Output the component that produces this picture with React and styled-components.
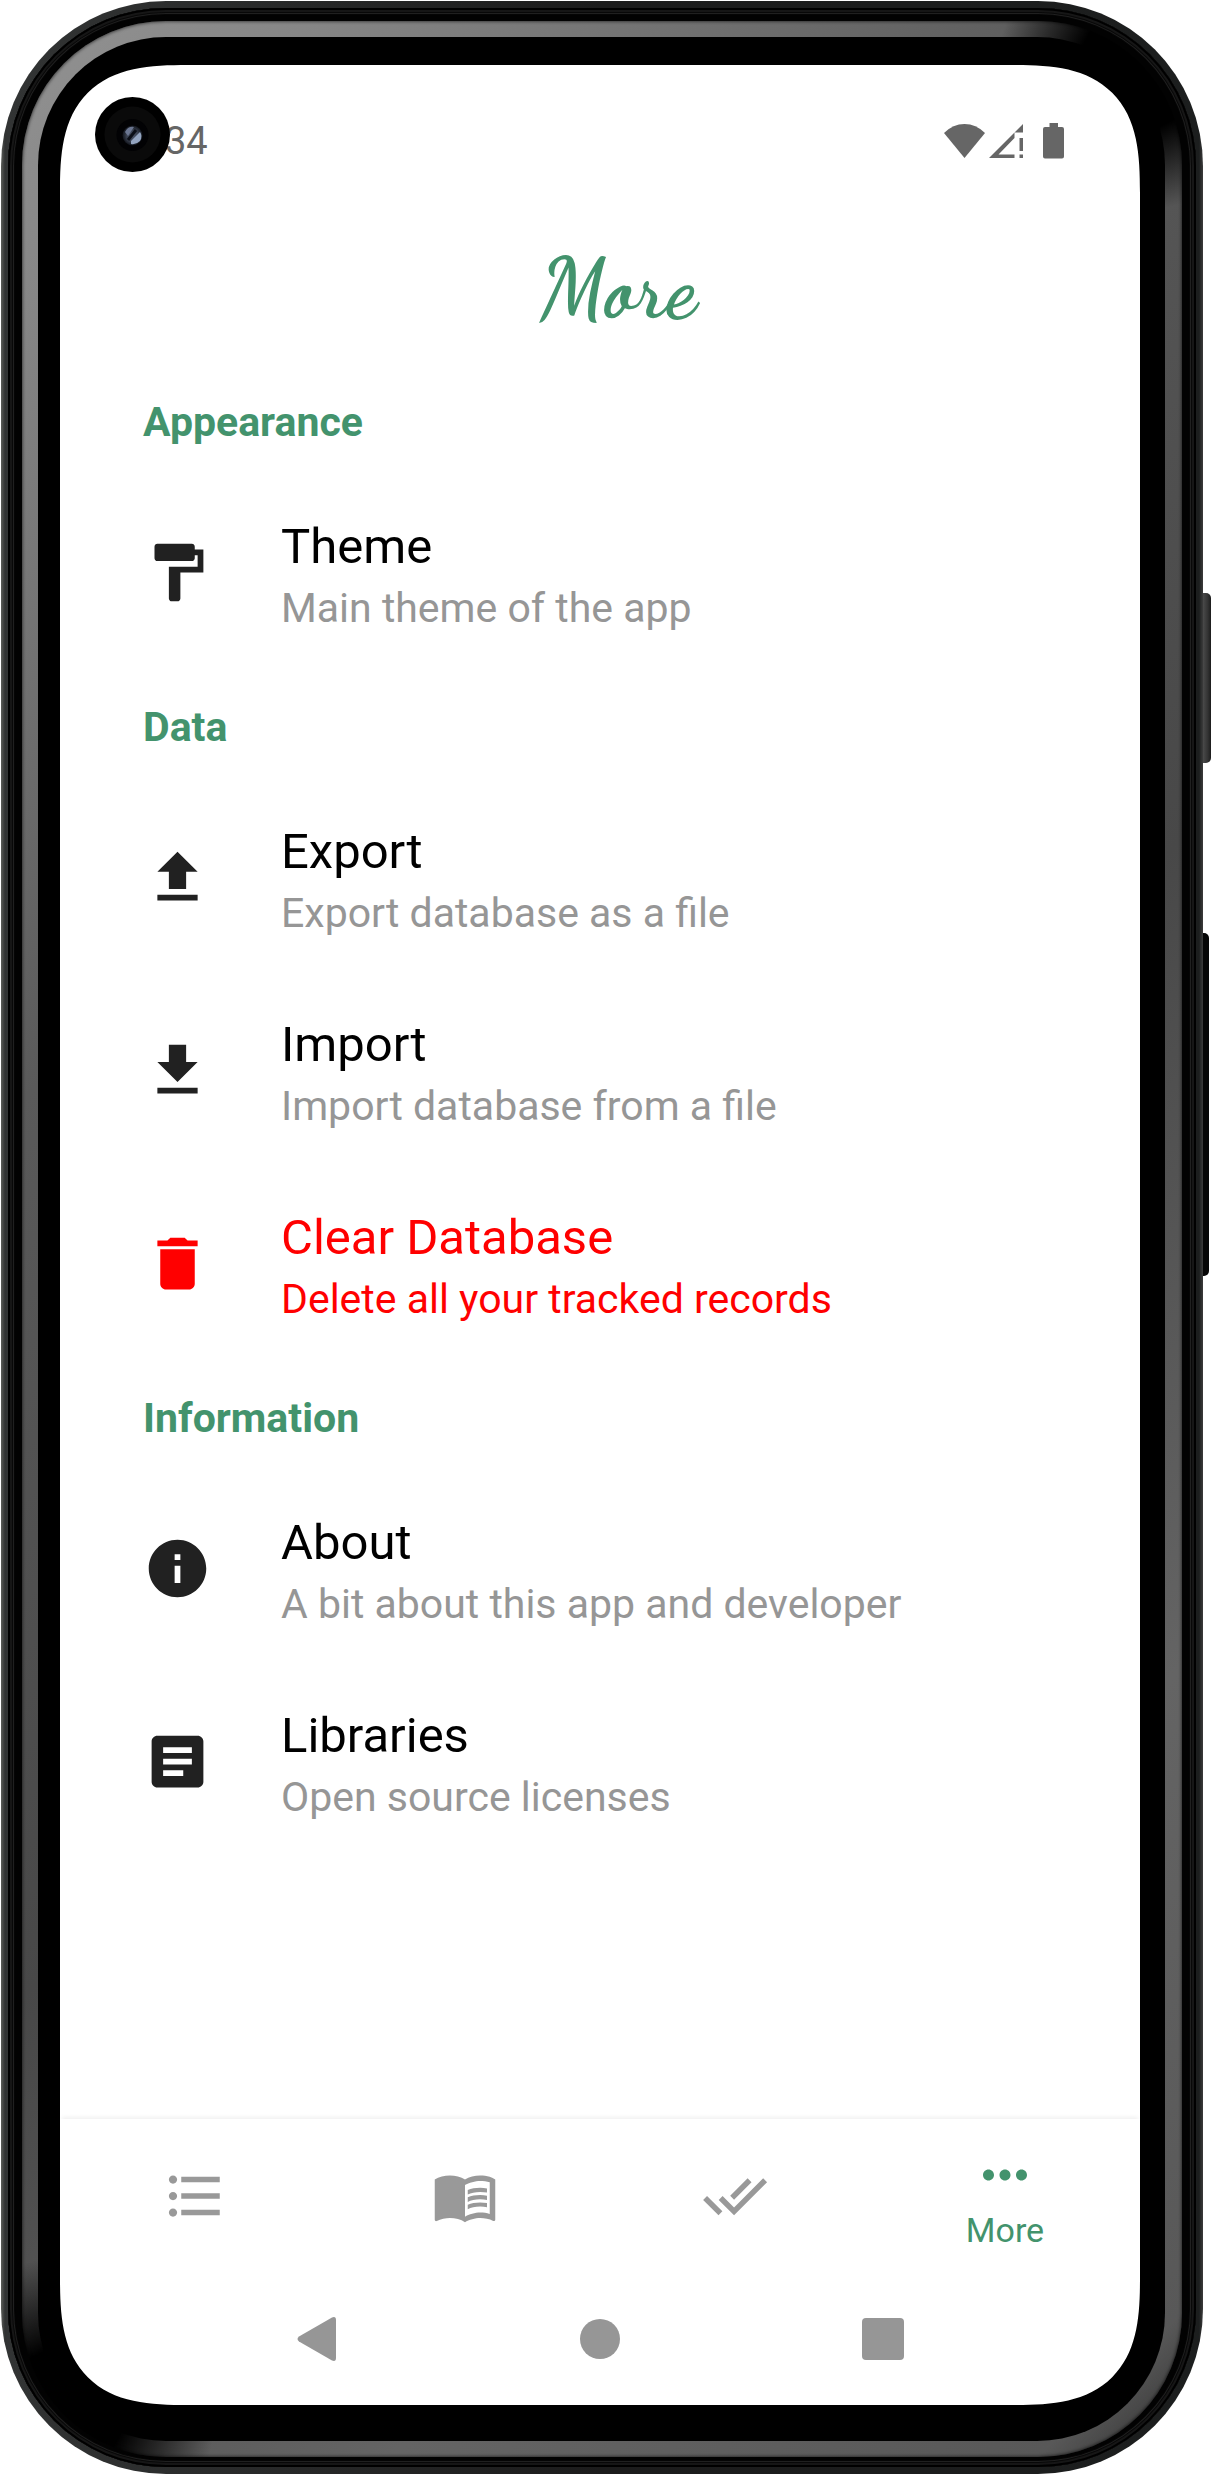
import React from "react";
import styled, { createGlobalStyle } from "styled-components";

const GREEN = "#43936d";
const RED = "#ff0000";
const MUTED = "#969696";

const GlobalStyle = createGlobalStyle`
  * { box-sizing: border-box; }
  body { margin: 0; background: #fff; font-family: Roboto, "Noto Sans", sans-serif; }
  button { border: 0; margin: 0; padding: 0; background: none; font: inherit; color: inherit; cursor: pointer; }
`;

const Stage = styled.div`
  display: flex;
  min-height: 100vh;
  padding: 1px 0 0 1px;
`;

const Shell = styled.div`
  flex: 1;
  display: flex;
  padding: 7px;
  border-radius: 165px;
  background: linear-gradient(90deg, #5c5e5a 0, #303232 4px, #323434 7px, #1c1c1c 50%, #1c1e1e calc(100% - 4px), #3c3c3c 100%);
`;

const Groove = styled.div`
  flex: 1;
  display: flex;
  padding: 13px 14px 10px 14px;
  border-radius: 158px;
  background: #020202;
  box-shadow: inset 0 0 0 2px #000, inset 0 0 0 4px #161616, inset 0 0 0 5px #080808, inset 0 0 0 6px #202020, inset 0 0 0 7px #050505;
`;

const Rim = styled.div`
  flex: 1;
  display: flex;
  padding: 16px 17px 16px 16px;
  border-radius: 144px;
  background:
    radial-gradient(circle at calc(100% - 45px) 50px, #000 0, #000 60px, transparent 140px),
    radial-gradient(circle at 45px calc(100% - 50px), #000 0, #000 60px, transparent 150px),
    linear-gradient(135deg, #929292 0, #868686 8%, #5a5a5a 30%, #484848 55%, #646464 78%, #585858 96%, #2c2c2c 100%);
  box-shadow: inset 0 0 3px 1px rgba(0, 0, 0, 0.5);
`;

const Bezel = styled.div`
  flex: 1;
  display: flex;
  padding: 28px 25px 36px 22px;
  border-radius: 128px;
  background: #000;
`;

const Screen = styled.div`
  position: relative;
  flex: 1;
  display: flex;
  flex-direction: column;
  overflow: hidden;
  border-radius: 100px;
  background: #fff;

  @supports (corner-shape: superellipse(1.5)) {
    border-radius: 128px;
    corner-shape: superellipse(1.5);
  }
`;

const SideKeys = styled.div`
  display: flex;
  flex-direction: column;
  width: 8px;
  padding-top: 592px;
  gap: 170px;
`;

const SideKey = styled.span`
  width: ${(p) => p.$width};
  height: ${(p) => p.$height};
  border-radius: 0 5px 5px 0;
  background: ${(p) => p.$fill};
`;

const Camera = styled.svg`
  position: absolute;
  top: 32px;
  left: 35px;
  width: 75px;
  height: 75px;
`;

const StatusBar = styled.div`
  display: flex;
  align-items: center;
  justify-content: space-between;
  height: 150px;
  padding: 2px 76px 0 105px;
  color: #666;
`;

const Clock = styled.span`
  font-size: 38px;
  line-height: 44px;
`;

const StatusIcons = styled.div`
  display: flex;
  align-items: center;
`;

const TitleBar = styled.header`
  display: flex;
  align-items: center;
  justify-content: center;
  height: 149px;
  padding-left: 36px;
`;

const Title = styled.h1`
  margin: 0;
  color: ${GREEN};
  font-family: "Dancing Script", "Liberation Serif", serif;
  font-size: 84px;
  font-weight: 700;
  line-height: 100px;
`;

const Settings = styled.main`
  flex: 1;
`;

const SectionTitle = styled.h2`
  display: flex;
  align-items: center;
  height: 112px;
  margin: 0;
  padding: 4px 83px 0;
  color: ${GREEN};
  font-size: 41px;
  font-weight: 700;
  line-height: 48px;
`;

const Row = styled.button`
  display: flex;
  align-items: center;
  gap: 69px;
  width: 100%;
  height: 193px;
  padding: 0 83px;
  text-align: left;
  color: ${(p) => (p.$danger ? RED : "#000")};
`;

const RowIcon = styled.svg`
  flex: none;
  width: 69px;
  height: 69px;
  fill: ${(p) => (p.$danger ? RED : "#212121")};
`;

const RowText = styled.span`
  display: flex;
  flex-direction: column;
`;

const RowTitle = styled.span`
  font-size: 49px;
  line-height: 70px;
`;

const RowNote = styled.span`
  font-size: 41px;
  line-height: 52px;
  color: ${(p) => (p.$danger ? RED : MUTED)};
`;

const Tabs = styled.nav`
  display: grid;
  grid-template-columns: repeat(4, 1fr);
  height: 154px;
  box-shadow: 0 -4px 4px -2px rgba(0, 0, 0, 0.06);
`;

const Tab = styled.button`
  display: flex;
  flex-direction: column;
  align-items: center;
  justify-content: center;
  gap: 2px;
  color: ${(p) => (p.$active ? GREEN : "#999")};
  font-size: 34px;
  line-height: 40px;
`;

const TabIcon = styled.svg`
  width: 66px;
  height: 66px;
  fill: currentColor;
`;

const SystemNav = styled.nav`
  display: grid;
  grid-template-columns: repeat(3, 1fr);
  height: 132px;
  padding: 0 115px;
  color: ${MUTED};
`;

const SystemButton = styled.button`
  display: flex;
  align-items: center;
  justify-content: center;
`;

const ICONS = {
  theme: "M18 4V3c0-.55-.45-1-1-1H5c-.55 0-1 .45-1 1v4c0 .55.45 1 1 1h12c.55 0 1-.45 1-1V6h1v4H9v11c0 .55.45 1 1 1h2c.55 0 1-.45 1-1v-9h8V4h-3z",
  export: "M5 10h4v6h6v-6h4l-7-7-7 7zM5 18v2h14v-2H5z",
  import: "M19 9h-4V3H9v6H5l7 7 7-7zM5 18v2h14v-2H5z",
  clear: "M6 19c0 1.1.9 2 2 2h8c1.1 0 2-.9 2-2V7H6v12zM19 4h-3.5l-1-1h-5l-1 1H5v2h14V4z",
  about: "M12 2C6.48 2 2 6.48 2 12s4.48 10 10 10 10-4.48 10-10S17.52 2 12 2zm1 15h-2v-6h2v6zm0-8h-2V7h2v2z",
  libraries: "M19 3H5c-1.1 0-2 .9-2 2v14c0 1.1.9 2 2 2h14c1.1 0 2-.9 2-2V5c0-1.1-.9-2-2-2zm-5 14H7v-2h7v2zm3-4H7v-2h10v2zm0-4H7V7h10v2z",
  list: "M4 10.5c-.83 0-1.5.67-1.5 1.5s.67 1.5 1.5 1.5 1.5-.67 1.5-1.5-.67-1.5-1.5-1.5zm0-6c-.83 0-1.5.67-1.5 1.5S3.17 7.5 4 7.5 5.5 6.83 5.5 6 4.83 4.5 4 4.5zm0 12c-.83 0-1.5.68-1.5 1.5s.68 1.5 1.5 1.5 1.5-.68 1.5-1.5-.67-1.5-1.5-1.5zM7 19h14v-2H7v2zm0-6h14v-2H7v2zm0-8v2h14V5H7z",
  book: "M21 5c-1.11-.35-2.33-.5-3.5-.5-1.95 0-4.05.4-5.5 1.5-1.45-1.1-3.55-1.5-5.5-1.5S2.45 4.9 1 6v14.65c0 .25.25.5.5.5.1 0 .15-.05.25-.05C3.1 20.45 5.05 20 6.5 20c1.95 0 4.05.4 5.5 1.5 1.35-.85 3.8-1.5 5.5-1.5 1.65 0 3.35.3 4.75 1.05.1.05.15.05.25.05.25 0 .5-.25.5-.5V6c-.6-.45-1.25-.75-2-1zm0 13.5c-1.1-.35-2.3-.5-3.5-.5-1.7 0-4.15.65-5.5 1.5V8c1.35-.85 3.8-1.5 5.5-1.5 1.2 0 2.4.15 3.5.5v11.5z M17.5 10.5c.88 0 1.73.09 2.5.26V9.24c-.79-.15-1.64-.24-2.5-.24-1.7 0-3.24.29-4.5.83v1.66c1.13-.64 2.7-.99 4.5-.99z M13 12.49v1.66c1.13-.64 2.7-.99 4.5-.99.88 0 1.73.09 2.5.26V11.9c-.79-.15-1.64-.24-2.5-.24-1.7 0-3.24.3-4.5.83z M17.5 14.33c-1.7 0-3.24.29-4.5.83v1.66c1.13-.64 2.7-.99 4.5-.99.88 0 1.73.09 2.5.26v-1.52c-.79-.16-1.64-.24-2.5-.24z",
  done: "M18 7l-1.41-1.41-6.34 6.34 1.41 1.41L18 7zm4.24-1.41L11.66 16.17 7.48 12l-1.41 1.41L11.66 19l12-12-1.42-1.41zM.41 13.41L6 19l1.41-1.41L1.83 12 .41 13.41z",
  more: "M6 10c-1.1 0-2 .9-2 2s.9 2 2 2 2-.9 2-2-.9-2-2-2zm12 0c-1.1 0-2 .9-2 2s.9 2 2 2 2-.9 2-2-.9-2-2-2zm-6 0c-1.1 0-2 .9-2 2s.9 2 2 2 2-.9 2-2-.9-2-2-2z",
};

const SECTIONS = [
  { title: "Appearance", rows: [{ icon: "theme", title: "Theme", note: "Main theme of the app" }] },
  {
    title: "Data",
    rows: [
      { icon: "export", title: "Export", note: "Export database as a file" },
      { icon: "import", title: "Import", note: "Import database from a file" },
      { icon: "clear", title: "Clear Database", note: "Delete all your tracked records", danger: true },
    ],
  },
  {
    title: "Information",
    rows: [
      { icon: "about", title: "About", note: "A bit about this app and developer" },
      { icon: "libraries", title: "Libraries", note: "Open source licenses" },
    ],
  },
];

const TABS = [
  { icon: "list", name: "List" },
  { icon: "book", name: "Book" },
  { icon: "done", name: "Done" },
  { icon: "more", name: "More", active: true },
];

function FrontCamera() {
  return (
    <Camera viewBox="0 0 75 75" aria-hidden="true">
      <defs>
        <radialGradient id="lens">
          <stop offset="0" stopColor="#4b5468" />
          <stop offset="0.6" stopColor="#39404f" />
          <stop offset="1" stopColor="#10131a" />
        </radialGradient>
      </defs>
      <circle cx="37.5" cy="37.5" r="37.5" fill="#000" />
      <circle cx="37.5" cy="37.5" r="28" fill="#0a0a0a" />
      <circle cx="37.5" cy="38" r="16" fill="#020204" />
      <circle cx="37.5" cy="38.5" r="10" fill="url(#lens)" />
      <path d="M30 35q3-6 9-5l-6 9z" fill="#6b7691" />
      <path d="M36 44l9-9q3 4 0 9-4 4-9 3z" fill="#93a4c0" />
      <path d="M33 43l8-10" stroke="#0b0e16" strokeWidth="3" />
    </Camera>
  );
}

function StatusGlyphs() {
  return (
    <StatusIcons>
      <svg width="120" height="36" viewBox="0 0 120 36" fill="currentColor" role="img" aria-label="Wi-Fi, no signal, battery full">
        <path d="M0 10Q9 1 20.5 1T41 10L20.5 35z" />
        <path d="M79 1v8.5h-8.5zM70.5 9.500V15L54.500 31.500h16V35H45z" />
        <path d="M75.5 15h3.500v13h-3.500zM75.500 31.500h3.500V35h-3.500z" />
        <path d="M105.500 0h8.500v4h4q2 0 2 2v27.500q0 2-2 2h-17q-2 0-2-2V6q0-2 2-2h4.500z" />
      </svg>
    </StatusIcons>
  );
}

function SettingRow({ icon, title, note, danger }) {
  return (
    <Row type="button" $danger={danger}>
      <RowIcon viewBox="0 0 24 24" $danger={danger} aria-hidden="true">
        <path d={ICONS[icon]} />
      </RowIcon>
      <RowText>
        <RowTitle>{title}</RowTitle>
        <RowNote $danger={danger}>{note}</RowNote>
      </RowText>
    </Row>
  );
}

export default function App() {
  return (
    <>
      <GlobalStyle />
      <Stage>
        <Shell>
          <Groove>
            <Rim>
              <Bezel>
                <Screen>
                  <StatusBar>
                    <Clock>34</Clock>
                    <StatusGlyphs />
                  </StatusBar>
                  <TitleBar>
                    <Title>More</Title>
                  </TitleBar>
                  <Settings>
                    {SECTIONS.map((section) => (
                      <section key={section.title}>
                        <SectionTitle>{section.title}</SectionTitle>
                        {section.rows.map((row) => (
                          <SettingRow key={row.title} {...row} />
                        ))}
                      </section>
                    ))}
                  </Settings>
                  <Tabs>
                    {TABS.map((tab) => (
                      <Tab key={tab.name} type="button" $active={tab.active} aria-label={tab.name}>
                        <TabIcon viewBox="0 0 24 24" aria-hidden="true">
                          <path d={ICONS[tab.icon]} />
                        </TabIcon>
                        {tab.active && <span>{tab.name}</span>}
                      </Tab>
                    ))}
                  </Tabs>
                  <SystemNav>
                    <SystemButton type="button" aria-label="Back">
                      <svg width="40" height="46" viewBox="0 0 40 46" fill="currentColor">
                        <path d="M35 1.5Q39 0 39 4v38q0 4-4 2.5L2 25.5Q-1 23 2 20.5z" />
                      </svg>
                    </SystemButton>
                    <SystemButton type="button" aria-label="Home">
                      <svg width="40" height="40" viewBox="0 0 40 40" fill="currentColor">
                        <circle cx="20" cy="20" r="20" />
                      </svg>
                    </SystemButton>
                    <SystemButton type="button" aria-label="Recent apps">
                      <svg width="42" height="42" viewBox="0 0 42 42" fill="currentColor">
                        <rect width="42" height="42" rx="4" />
                      </svg>
                    </SystemButton>
                  </SystemNav>
                  <FrontCamera />
                </Screen>
              </Bezel>
            </Rim>
          </Groove>
        </Shell>
        <SideKeys>
          <SideKey $width="8px" $height="170px" $fill="linear-gradient(90deg, #4a4a4a, #333 60%, #1c1c1c)" />
          <SideKey $width="6px" $height="343px" $fill="#060606" />
        </SideKeys>
      </Stage>
    </>
  );
}
